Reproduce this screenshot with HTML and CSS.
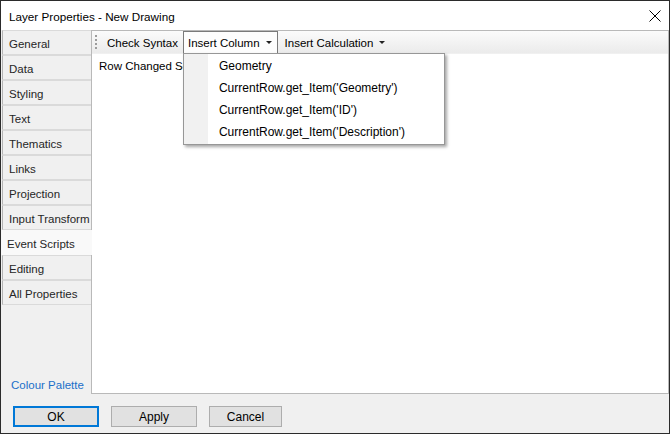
FILE: index.html
```html
<!DOCTYPE html>
<html lang="en">
<head>
  <meta charset="UTF-8" />
  <title>Layer Properties - New Drawing</title>
  <link rel="stylesheet" href="styles.css">
</head>
<body>
  <div class="window">
    <div class="titlebar">
      <span class="title">Layer Properties - New Drawing</span>
      <svg class="close" width="12" height="12" viewBox="0 0 12 12">
        <path d="M0.5 0.5 L11.5 11.5 M11.5 0.5 L0.5 11.5" stroke="#000" stroke-width="1" fill="none" />
      </svg>
    </div>
    <div class="body">
      <div class="sidebar">
        <div class="tab">General</div>
        <div class="tab">Data</div>
        <div class="tab">Styling</div>
        <div class="tab">Text</div>
        <div class="tab">Thematics</div>
        <div class="tab">Links</div>
        <div class="tab">Projection</div>
        <div class="tab">Input Transform</div>
        <div class="tab active">Event Scripts</div>
        <div class="tab">Editing</div>
        <div class="tab">All Properties</div>
        <a class="palette-link">Colour Palette</a>
      </div>
      <div class="panel">
        <div class="toolbar">
          <span class="grip"></span>
          <span class="tool tool-check">Check Syntax</span>
          <span class="tool open">Insert Column <span class="arrow"></span>
            <div class="menu">
              <div class="menu-item">Geometry</div>
              <div class="menu-item">CurrentRow.get_Item('Geometry')</div>
              <div class="menu-item">CurrentRow.get_Item('ID')</div>
              <div class="menu-item">CurrentRow.get_Item('Description')</div>
            </div>
          </span>
          <span class="tool">Insert Calculation <span class="arrow"></span></span>
        </div>
        <div class="content">
          <div class="event-name">Row Changed Script</div>
        </div>
      </div>
    </div>
    <div class="footer">
      <button class="btn btn-ok">OK</button>
      <button class="btn btn-apply">Apply</button>
      <button class="btn btn-cancel">Cancel</button>
    </div>
  </div>
</body>
</html>
```

FILE: styles.css
```css
body {
  margin: 0;
  padding: 0;
  font-family: "Liberation Sans", Arial, sans-serif;
  font-size: 11.5px;
  color: #000;
}
.window {
  width: 670px;
  height: 434px;
  box-sizing: border-box;
  border: 1px solid #2b2b2b;
  background-color: #f0f0f0;
  display: flex;
  flex-direction: column;
}
.titlebar {
  height: 29px;
  background-color: #fff;
  display: flex;
  align-items: center;
  justify-content: space-between;
  padding: 0 8px 0 8px;
}
.title {
  font-size: 11.7px;
  padding-top: 1px;
}
.body {
  height: 364px;
  display: flex;
}
.sidebar {
  width: 90px;
  display: flex;
  flex-direction: column;
}
.tab {
  height: 22px;
  padding-top: 1px;
  line-height: 24px;
  margin-left: 1px;
  padding-left: 6px;
  border-left: 1px solid #b4b4b4;
  border-top: 1px solid #dadada;
  border-bottom: 1px solid #dadada;
  color: #262626;
  white-space: nowrap;
  overflow: hidden;
}
.tab.active {
  margin-left: 0;
  padding-left: 5px;
  border-left: 1px solid #f9f9f9;
  background-color: #f9f9f9;
  margin-right: -1px;
  position: relative;
  z-index: 1;
  border-color: #f9f9f9;
}
.palette-link {
  margin-top: auto;
  margin-bottom: 3px;
  padding-left: 10px;
  color: #1a6fc9;
}
.panel {
  flex: 1;
  border: 1px solid #b9b9b9;
  background-color: #fff;
  display: flex;
  flex-direction: column;
}
.toolbar {
  height: 22px;
  display: flex;
  align-items: stretch;
  background: linear-gradient(#fbfbfb, #ebebeb);
  border-bottom: 1px solid #f0f0f0;
}
.grip {
  width: 2px;
  margin: 3px 4px 3px 3px;
  background: radial-gradient(circle, #9c9c9c 0.9px, transparent 1.1px) 0 0 / 2px 4px;
}
.tool {
  display: flex;
  align-items: center;
  padding: 0 5px 0 5px;
  margin-right: 1px;
  border: 1px solid transparent;
  border-bottom: none;
  position: relative;
  white-space: nowrap;
}
.tool-check {
  padding-right: 3px;
}
.tool.open {
  border-color: #7a7a7a;
  background-color: #fdfdfd;
  padding-left: 4px;
}
.arrow {
  display: inline-block;
  width: 0;
  height: 0;
  margin-left: 6px;
  border-left: 3px solid transparent;
  border-right: 3px solid transparent;
  border-top: 3px solid #222;
}
.menu {
  position: absolute;
  top: 100%;
  left: -1px;
  width: 260px;
  padding: 1px 0;
  background: linear-gradient(to right, #f1f1f1 0, #f1f1f1 24px, #fff 24px);
  border: 1px solid #979797;
  box-shadow: 2px 2px 3px rgba(0, 0, 0, 0.35);
  z-index: 5;
  font-size: 12px;
}
.menu-item {
  height: 22px;
  line-height: 22px;
  padding-left: 35px;
}
.content {
  flex: 1;
  background-color: #fff;
}
.event-name {
  padding: 6px 7px;
}
.footer {
  flex: 1;
  display: flex;
  align-items: flex-start;
  padding: 12px 0 0 12px;
  gap: 12px;
}
.btn {
  height: 21px;
  width: 86px;
  font-family: "Liberation Sans", Arial, sans-serif;
  font-size: 12px;
  background-color: #e1e1e1;
  border: 1px solid #adadad;
  color: #000;
  padding: 0;
}
.btn-ok {
  border: 2px solid #0078d7;
}
.btn-cancel {
  width: 73px;
}
```
